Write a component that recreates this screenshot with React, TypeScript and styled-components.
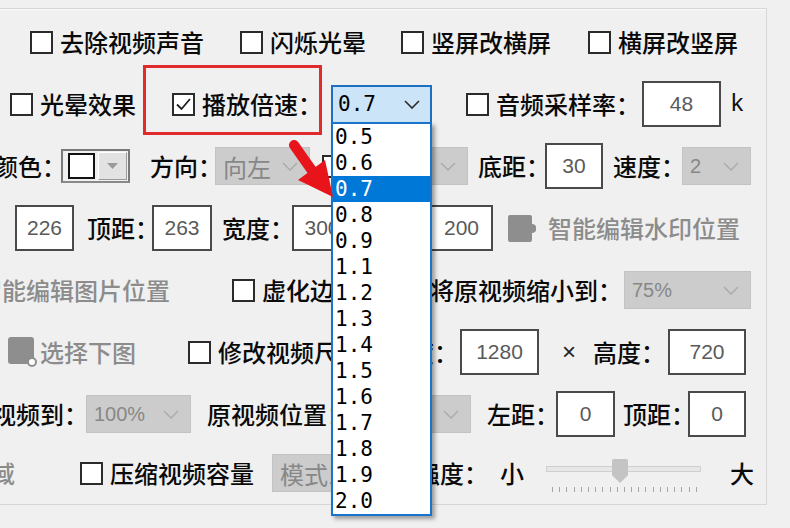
import React from "react";
import styled, { createGlobalStyle } from "styled-components";

const GlobalStyle = createGlobalStyle`
  html, body {
    margin: 0;
    padding: 0;
    background: #f0f0f0;
  }
  body {
    overflow: hidden;
    font-family: "Noto Sans CJK SC", "Noto Sans", sans-serif;
  }
`

type Off = { $ml?: number }

const Screen = styled.div`
  position: relative;
  width: 790px;
  height: 528px;
  overflow: hidden;
  background: #f0f0f0;
  padding-top: 8px;
  box-sizing: border-box;
`

const GroupBox = styled.div`
  width: 801px;
  margin-left: -34px;
  padding: 2px 0 3px 33px;
  border: 1px solid #d6d6d6;
  box-shadow: inset 1px 1px 0 #fbfbfb;
  box-sizing: border-box;
`

const Row = styled.div<{ $h?: number }>`
  display: flex;
  align-items: center;
  height: ${p => p.$h ?? 62}px;
  white-space: nowrap;
`

const Label = styled.span<Off & { $off?: boolean }>`
  flex-shrink: 0;
  margin-left: ${p => p.$ml ?? 0}px;
  font-size: 24px;
  line-height: 32px;
  font-weight: 500;
  font-feature-settings: "halt";
  color: ${p => (p.$off ? "#8c8c8c" : "#0a0a0a")};
`

const Unit = styled.span<Off>`
  margin-left: ${p => p.$ml ?? 0}px;
  font-family: "Liberation Mono", monospace;
  font-size: 24px;
  color: #111;
`

const Times = styled.span<Off>`
  margin-left: ${p => p.$ml ?? 0}px;
  font-family: "Liberation Sans", sans-serif;
  font-size: 24px;
  color: #222;
`

const Item = styled.span<Off>`
  display: flex;
  align-items: center;
  gap: 7px;
  flex-shrink: 0;
  margin-left: ${p => p.$ml ?? 0}px;
`

const Box = styled.span<Off>`
  display: inline-flex;
  align-items: center;
  justify-content: center;
  flex-shrink: 0;
  width: 23px;
  height: 23px;
  margin-left: ${p => p.$ml ?? 0}px;
  border: 2px solid #2b2b2b;
  background: #fff;
  box-sizing: border-box;
`

const Marked = styled.span<Off>`
  position: relative;
  display: flex;
  margin-left: ${p => p.$ml ?? 0}px;

  &::after {
    content: "";
    position: absolute;
    left: -29px;
    right: -12px;
    top: -23px;
    bottom: -15px;
    border: 3px solid #e12a2c;
    pointer-events: none;
  }
`

const TextBox = styled.div<Off & { $w: number }>`
  display: flex;
  align-items: center;
  justify-content: center;
  flex-shrink: 0;
  width: ${p => p.$w}px;
  height: 46px;
  margin-left: ${p => p.$ml ?? 0}px;
  background: #fff;
  border: 2px solid #4a4a4a;
  box-sizing: border-box;
  overflow: hidden;
  font-family: "Liberation Sans", sans-serif;
  font-size: 21px;
  color: #5a5a5a;
`

const Dull = styled.div<Off & { $w: number }>`
  display: flex;
  align-items: center;
  justify-content: space-between;
  flex-shrink: 0;
  width: ${p => p.$w}px;
  height: 38px;
  margin-left: ${p => p.$ml ?? 0}px;
  padding: 0 11px 0 7px;
  background: #cccccc;
  border: 1px solid #c3c3c3;
  box-sizing: border-box;
  color: #878787;
`

const DullText = styled.span<{ $cjk?: boolean }>`
  font-family: ${p => (p.$cjk ? `"Noto Sans CJK SC"` : `"Liberation Sans"`)}, sans-serif;
  font-size: ${p => (p.$cjk ? 24 : 20)}px;
`

const Speed = styled.div<Off>`
  position: relative;
  display: flex;
  align-items: center;
  justify-content: space-between;
  flex-shrink: 0;
  width: 101px;
  height: 39px;
  margin-left: ${p => p.$ml ?? 0}px;
  padding: 0 10px 0 5px;
  background: #cce4f7;
  border: 2px solid #1f6fc0;
  box-sizing: border-box;
  font-family: "DejaVu Sans Mono", monospace;
  font-size: 21px;
  color: #000;
`

const DropList = styled.ul`
  position: absolute;
  z-index: 5;
  left: -2px;
  top: calc(100% + 0px);
  width: 101px;
  margin: 0;
  padding: 0;
  list-style: none;
  background: #fff;
  border: 2px solid #1b74cc;
  box-sizing: border-box;
  box-shadow: 3px 3px 4px rgba(0, 0, 0, 0.35);
`

const Option = styled.li<{ $on?: boolean }>`
  height: 26px;
  line-height: 26px;
  padding-left: 2px;
  font-family: "DejaVu Sans Mono", monospace;
  font-size: 21px;
  background: ${p => (p.$on ? "#0078d7" : "#fff")};
  color: ${p => (p.$on ? "#fff" : "#000")};
`

const Picker = styled.div<Off>`
  display: flex;
  align-items: center;
  gap: 3px;
  flex-shrink: 0;
  width: 69px;
  height: 34px;
  margin-left: ${p => p.$ml ?? 0}px;
  padding: 0 1px 0 5px;
  border: 2px solid #7a7a7a;
  border-bottom-color: #8a8a8a;
  box-sizing: border-box;
  background: #f0f0f0;
`

const Swatch = styled.span`
  width: 27px;
  height: 26px;
  border: 2px solid #111;
  background: #fff;
  box-sizing: border-box;
`

const PickBtn = styled.span`
  display: flex;
  align-items: center;
  justify-content: center;
  width: 29px;
  height: 28px;
  background: #e2e2e2;
  border-top: 1px solid #fff;
  border-left: 1px solid #fff;
  border-right: 1px solid #9a9a9a;
  border-bottom: 1px solid #9a9a9a;
  box-sizing: border-box;
`

const Icon = styled.svg<Off>`
  flex-shrink: 0;
  margin-left: ${p => p.$ml ?? 0}px;
`

const Slider = styled.div<Off>`
  position: relative;
  flex-shrink: 0;
  width: 155px;
  height: 40px;
  margin-left: ${p => p.$ml ?? 0}px;
`

const Track = styled.div`
  margin-top: 13px;
  height: 6px;
  background: #e7e7e7;
  border: 1px solid #cfcfcf;
  box-sizing: border-box;
`

const Thumb = styled.div`
  position: absolute;
  left: 66px;
  top: 6px;
  width: 16px;
  height: 24px;
  background: #c4c4c4;
  border-radius: 2px 2px 0 0;
  clip-path: polygon(0 0, 100% 0, 100% 68%, 50% 100%, 0 68%);
`

const Ticks = styled.div`
  display: flex;
  justify-content: space-between;
  margin-top: 15px;
  padding: 0 4px 0 6px;
`

const Tick = styled.span`
  width: 1px;
  height: 5px;
  background: #a5a5a5;
`

const Arrow = styled.svg`
  position: absolute;
  z-index: 6;
  left: 286px;
  top: 138px;
`

const Chevron = ({ dark }: { dark?: boolean }) => (
  <svg width="16" height="9" viewBox="0 0 16 9">
    <polyline
      points="1,1 8,8 15,1"
      fill="none"
      stroke={dark ? "#2a2a2a" : "#a9a9a9"}
      strokeWidth={dark ? 1.6 : 1.3}
    />
  </svg>
)

const Check = ({ label, ml, on }: { label: string; ml?: number; on?: boolean }) => (
  <Item $ml={ml}>
    <Box>
      {on && (
        <svg width="19" height="19" viewBox="0 0 19 19">
          <polyline points="3,9.5 7.5,14 16,4" fill="none" stroke="#1e1e1e" strokeWidth="1.8" />
        </svg>
      )}
    </Box>
    <Label>{label}</Label>
  </Item>
)

const Select = ({ w, ml, value, cjk }: { w: number; ml?: number; value?: string; cjk?: boolean }) => (
  <Dull $w={w} $ml={ml}>
    <DullText $cjk={cjk}>{value}</DullText>
    <Chevron />
  </Dull>
)

const speeds = ["0.5", "0.6", "0.7", "0.8", "0.9", "1.1", "1.2", "1.3", "1.4", "1.5", "1.6", "1.7", "1.8", "1.9", "2.0"]

export default function App() {
  return (
    <>
      <GlobalStyle />
      <Screen>
        <GroupBox>
          <Row>
            <Check ml={30} label="去除视频声音" />
            <Check ml={36} label="闪烁光晕" />
            <Check ml={35} label="竖屏改横屏" />
            <Check ml={37} label="横屏改竖屏" />
          </Row>

          <Row>
            <Check ml={10} label="光晕效果" />
            <Marked $ml={36}>
              <Check on label="播放倍速：" />
            </Marked>
            <Speed $ml={21}>
              <span>0.7</span>
              <Chevron dark />
              <DropList>
                {speeds.map(s => (
                  <Option key={s} $on={s === "0.7"}>{s}</Option>
                ))}
              </DropList>
            </Speed>
            <Check ml={34} label="音频采样率：" />
            <TextBox $ml={14} $w={79}>48</TextBox>
            <Unit $ml={9}>k</Unit>
          </Row>

          <Row>
            <Label $ml={-6}>颜色：</Label>
            <Picker $ml={7}>
              <Swatch />
              <PickBtn>
                <svg width="11" height="6" viewBox="0 0 11 6">
                  <polygon points="0,0 11,0 5.5,6" fill="#9a9a9a" />
                </svg>
              </PickBtn>
            </Picker>
            <Label $ml={20}>方向：</Label>
            <Select ml={5} w={95} value="向左" cjk />
            <Box $ml={12} />
            <Select ml={15} w={108} />
            <Label $ml={10}>底距：</Label>
            <TextBox $ml={7} $w={58}>30</TextBox>
            <Label $ml={10}>速度：</Label>
            <Select ml={9} w={69} value="2" />
          </Row>

          <Row>
            <TextBox $ml={15} $w={59}>226</TextBox>
            <Label $ml={13}>顶距：</Label>
            <TextBox $ml={5} $w={60}>263</TextBox>
            <Label $ml={10}>宽度：</Label>
            <TextBox $ml={10} $w={60}>300</TextBox>
            <TextBox $ml={78} $w={63}>200</TextBox>
            <Icon $ml={15} width="28" height="29" viewBox="0 0 28 29">
              <path d="M2 1h20a2 2 0 0 1 2 2v7a4 4 0 0 1 0 9v7a2 2 0 0 1-2 2H2a2 2 0 0 1-2-2V3a2 2 0 0 1 2-2z" fill="#8e8e8e" />
            </Icon>
            <Label $ml={12} $off>智能编辑水印位置</Label>
          </Row>

          <Row>
            <Label $ml={-22} $off>智能编辑图片位置</Label>
            <Check ml={62} label="虚化边框" />
            <Label $ml={72}>将原视频缩小到：</Label>
            <Select ml={14} w={127} value="75%" />
          </Row>

          <Row>
            <Icon $ml={8} width="29" height="30" viewBox="0 0 29 30">
              <rect x="0" y="0" width="26" height="27" rx="3" fill="#8e8e8e" />
              <circle cx="24" cy="25" r="4" fill="#fff" stroke="#8e8e8e" strokeWidth="2" />
            </Icon>
            <Label $ml={3} $off>选择下图</Label>
            <Check ml={52} label="修改视频尺寸" />
            <Label $ml={24}>宽度：</Label>
            <TextBox $ml={14} $w={79}>1280</TextBox>
            <Times $ml={23}>×</Times>
            <Label $ml={17}>高度：</Label>
            <TextBox $ml={15} $w={78}>720</TextBox>
          </Row>

          <Row>
            <Label $ml={-56}>缩放视频到：</Label>
            <Select ml={10} w={105} value="100%" />
            <Label $ml={16}>原视频位置：</Label>
            <Select ml={21} w={111} />
            <Label $ml={16}>左距：</Label>
            <TextBox $ml={9} $w={59}>0</TextBox>
            <Label $ml={8}>顶距：</Label>
            <TextBox $ml={5} $w={58}>0</TextBox>
          </Row>

          <Row $h={56}>
            <Label $ml={-81} $off>指定区域</Label>
            <Check ml={65} label="压缩视频容量" />
            <Select ml={18} w={120} value="模式1" cjk />
            <Label $ml={24}>强度：</Label>
            <Label $ml={24}>小</Label>
            <Slider $ml={22}>
              <Track />
              <Thumb />
              <Ticks>
                {Array.from({ length: 21 }, (_, i) => <Tick key={i} />)}
              </Ticks>
            </Slider>
            <Label $ml={29}>大</Label>
          </Row>
        </GroupBox>

        <Arrow width="52" height="64" viewBox="0 0 52 64">
          <line x1="8" y1="7" x2="27" y2="34" stroke="#e8141b" strokeWidth="10" strokeLinecap="round" />
          <polygon points="47,59 12,42 39,22" fill="#e8141b" />
        </Arrow>
      </Screen>
    </>
  )
}
